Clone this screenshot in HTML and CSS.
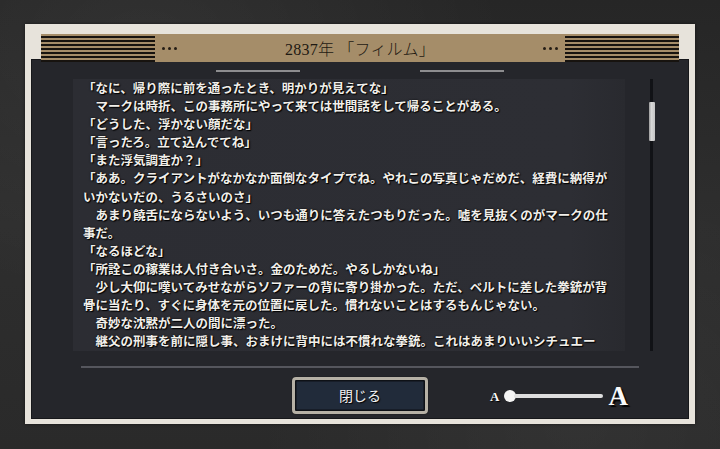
FILE: index.html
```html
<!DOCTYPE html>
<html lang="ja">
<head>
<meta charset="utf-8">
<title>2837年「フィルム」</title>
<link rel="stylesheet" href="styles.css">
</head>
<body>
<div class="stage">
  <div class="frame">
    <div class="header">
      <div class="stripes"></div>
      <div class="dots"><i></i><i></i><i></i></div>
      <div class="title">2837年 「フィルム」</div>
      <div class="dots"><i></i><i></i><i></i></div>
      <div class="stripes"></div>
    </div>
    <div class="panel">
      <div class="deco"><span></span><span></span></div>
      <div class="body">
        <div class="textbox">
          <div class="story">
            <p>「なに、帰り際に前を通ったとき、明かりが見えてな」</p>
            <p>　マークは時折、この事務所にやって来ては世間話をして帰ることがある。</p>
            <p>「どうした、浮かない顔だな」</p>
            <p>「言ったろ。立て込んでてね」</p>
            <p>「また浮気調査か？」</p>
            <p>「ああ。クライアントがなかなか面倒なタイプでね。やれこの写真じゃだめだ、経費に納得がいかないだの、うるさいのさ」</p>
            <p>　あまり饒舌にならないよう、いつも通りに答えたつもりだった。嘘を見抜くのがマークの仕事だ。</p>
            <p>「なるほどな」</p>
            <p>「所詮この稼業は人付き合いさ。金のためだ。やるしかないね」</p>
            <p>　少し大仰に嘆いてみせながらソファーの背に寄り掛かった。ただ、ベルトに差した拳銃が背骨に当たり、すぐに身体を元の位置に戻した。慣れないことはするもんじゃない。</p>
            <p>　奇妙な沈黙が二人の間に漂った。</p>
            <p>　継父の刑事を前に隠し事、おまけに背中には不慣れな拳銃。これはあまりいいシチュエー</p>
          </div>
        </div>
        <div class="scrollbar"><div class="thumb"></div></div>
      </div>
      <div class="separator"></div>
      <div class="controls">
        <div></div>
        <button class="close">閉じる</button>
        <div class="size">
          <span class="a-small">A</span>
          <div class="slider"><div class="knob"></div><div class="track"></div></div>
          <span class="a-large">A</span>
        </div>
      </div>
    </div>
  </div>
</div>
</body>
</html>
```
FILE: styles.css
```css
* { box-sizing: border-box; }
html, body { margin: 0; padding: 0; }
body {
  width: 720px;
  height: 449px;
  overflow: hidden;
  background: #2b2b2b;
}
.stage {
  width: 720px;
  height: 449px;
  padding: 24px 25px 0 25px;
  background:
    radial-gradient(ellipse at 20% 10%, rgba(255,255,255,0.05), rgba(0,0,0,0) 45%),
    radial-gradient(ellipse at 80% 95%, rgba(255,255,255,0.04), rgba(0,0,0,0) 40%),
    linear-gradient(180deg, #262626 0%, #2e2e2e 50%, #2a2a2a 100%);
}
.frame {
  width: 670px;
  height: 400px;
  background: #e7e3db;
  padding-top: 10px;
  display: flex;
  flex-direction: column;
  box-shadow: 0 0 3px rgba(0,0,0,0.5);
}
.header {
  position: relative;
  z-index: 2;
  height: 28px;
  margin: 0 16px;
  background: #a58d69;
  display: flex;
  align-items: center;
}
.stripes {
  width: 114px;
  height: 28px;
  background: repeating-linear-gradient(180deg, #a58d69 0 2px, #17130f 2px 4px);
}
.dots {
  display: flex;
  gap: 3px;
  margin: 0 7px;
  padding-top: 1px;
}
.dots i {
  display: block;
  width: 3px;
  height: 3px;
  border-radius: 50%;
  background: #241d15;
}
.title {
  flex: 1;
  text-align: center;
  font-family: "Liberation Serif", "Noto Sans CJK JP", serif;
  font-size: 16px;
  font-weight: 300;
  color: #1e1912;
  letter-spacing: 0.2px;
}
.panel {
  height: 360px;
  margin: -3px 6px 0 6px;
  background: #25262b;
  border: 1px solid #16171a;
  display: flex;
  flex-direction: column;
}
.deco {
  display: flex;
  justify-content: center;
  gap: 120px;
  padding-top: 10px;
}
.deco span {
  display: block;
  width: 84px;
  height: 2px;
  background: #8d8d8f;
}
.body {
  display: flex;
  margin-top: 7px;
  height: 272px;
  padding-left: 41px;
}
.textbox {
  width: 552px;
  height: 272px;
  background: linear-gradient(90deg, #2c2d33 0%, #2d2e34 90%, #292a2f 100%);
  overflow: hidden;
  padding: 0 12px 0 10px;
}
.story {
  width: 530px;
  font-family: "Noto Sans CJK JP", sans-serif;
  font-size: 12.5px;
  line-height: 18.1px;
  font-weight: 700;
  color: #f1efea;
  text-shadow: 1px 1px 1px #000, 0 0 2px #000;
  line-break: strict;
}
.story p { margin: 0; }
.scrollbar {
  width: 6px;
  height: 272px;
  margin-left: 24px;
  display: flex;
  flex-direction: column;
  align-items: center;
  background: linear-gradient(90deg, transparent 0 1.5px, #111216 1.5px 4.5px, transparent 4.5px);
}
.thumb {
  width: 6px;
  height: 39px;
  margin-top: 23px;
  background: linear-gradient(90deg, #9b9b9b, #d8d8d8 40%, #c4c4c4);
  border-radius: 1px;
}
.separator {
  margin: 15px 0 0 49px;
  width: 558px;
  height: 1.5px;
  background: #55565d;
}
.controls {
  display: grid;
  grid-template-columns: 1fr auto 1fr;
  align-items: center;
  margin-top: 9px;
}
.close {
  width: 136px;
  height: 37px;
  padding: 0;
  border: 3px solid #b6b1a6;
  border-radius: 4px;
  background: #212b3a;
  box-shadow: inset 0 0 0 1.5px #0e1116, 0 0 1px #000;
  font-family: "Noto Sans CJK JP", sans-serif;
  font-size: 14px;
  color: #f2f2f2;
  text-shadow: 1px 1px 1px #000;
}
.size {
  display: flex;
  align-items: center;
  margin-left: 62px;
  padding-top: 2px;
}
.a-small, .a-large {
  font-family: "Liberation Serif", serif;
  font-weight: bold;
  color: #fafafa;
  line-height: 1;
}
.a-small {
  font-size: 13px;
  text-shadow: 1px 1px 1px #000;
}
.a-large {
  font-size: 27px;
  margin-left: 5px;
  text-shadow: 2px 2px 1px #000;
}
.slider {
  display: flex;
  align-items: center;
  width: 99px;
  margin-left: 5px;
}
.knob {
  width: 12px;
  height: 12px;
  border-radius: 50%;
  background: #f4f4f4;
  flex-shrink: 0;
}
.track {
  flex: 1;
  height: 4px;
  margin-left: -2px;
  border-radius: 2px;
  background: #dedede;
}
```
